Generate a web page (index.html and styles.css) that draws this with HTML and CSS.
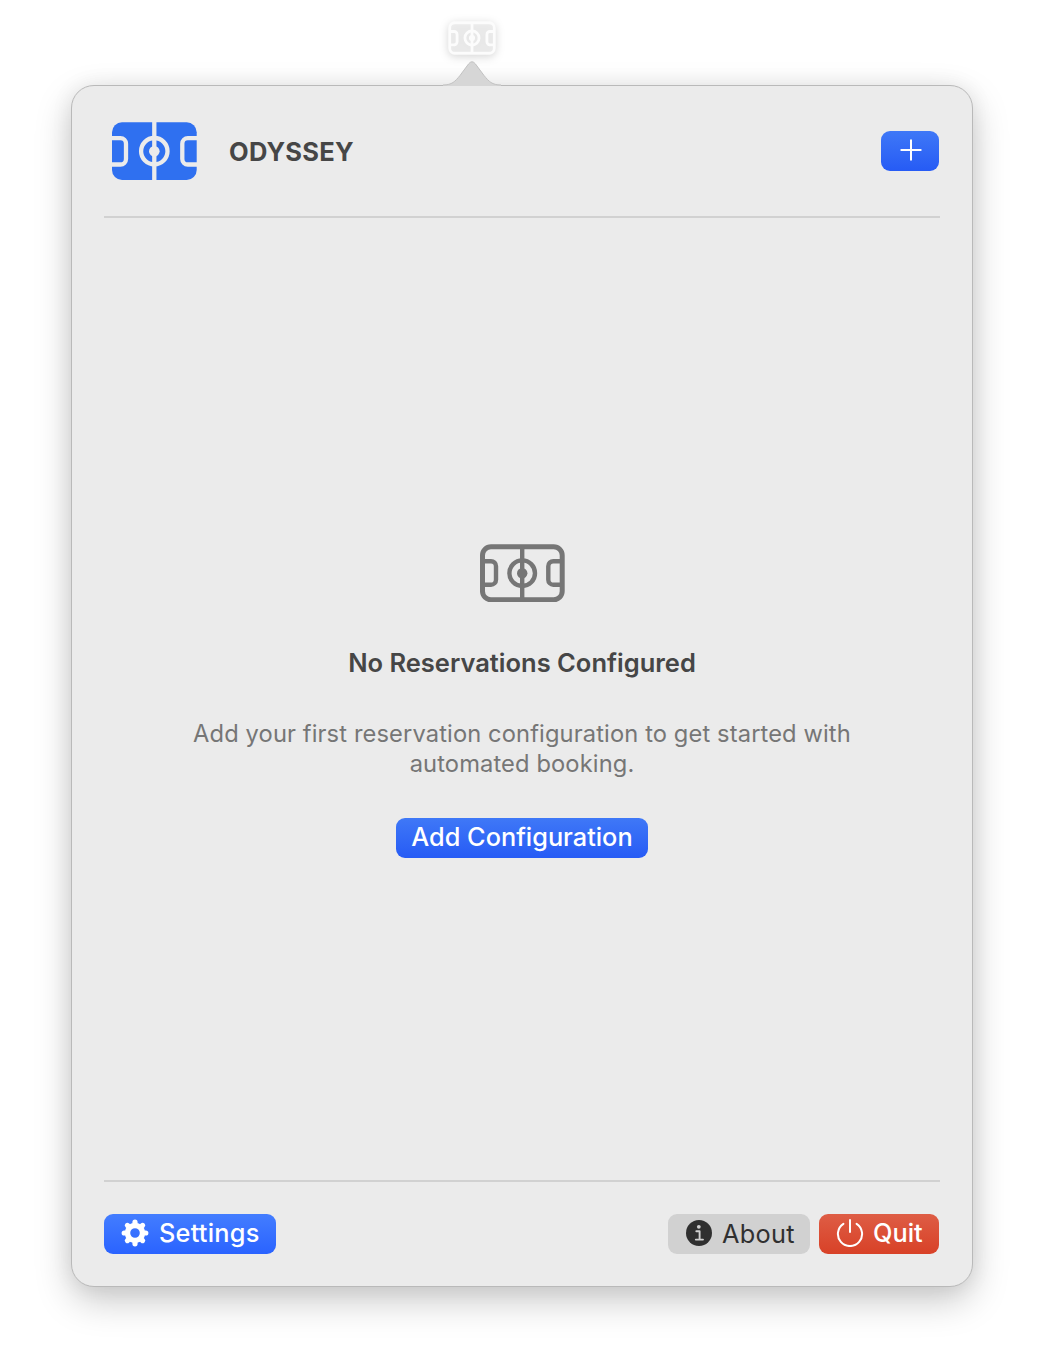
FILE: index.html
```
<!DOCTYPE html>
<html lang="en">
<head>
<meta charset="utf-8">
<title>Odyssey</title>
<link rel="stylesheet" href="styles.css">
</head>
<body>
<div class="menubar">
  <svg class="menubar-icon" width="48" height="34" viewBox="0 0 85 60" fill="none" stroke="#fcfcfc" stroke-width="4.9">
    <rect class="glass" x="3" y="3" width="79" height="54" rx="9"/>
    <path d="M42.500 3V57M3 18.500H11a5 5 0 0 1 5 5V37a5 5 0 0 1-5 5H3M82 18.500H74a5 5 0 0 0-5 5V37a5 5 0 0 0 5 5h8"/>
    <circle cx="42.500" cy="30" r="12.500"/>
    <circle cx="42.500" cy="30" r="5.400" fill="#fcfcfc" stroke="none"/>
  </svg>
</div>
<main class="popover">
  <svg class="arrow" width="64" height="26" viewBox="0 0 64 26">
    <path d="M3 25C12 25 15 21.500 20 15.500L28.500 4Q32 -0.500 35.500 4L44 15.500C49 21.500 52 25 61 25V26H3Z" fill="#d6d6d6"/>
    <path d="M3 25C12 25 15 21.500 20 15.500L28.500 4Q32 -0.500 35.500 4L44 15.500C49 21.500 52 25 61 25" fill="none" stroke="#c2c2c2"/>
  </svg>
  <header class="header">
    <svg class="logo" width="85" height="58" viewBox="0 0 85 58" fill="none" stroke="#ebebeb" stroke-width="4.3">
      <rect x="0" y="0.300" width="84.700" height="57.700" rx="10" fill="#2f70f0" stroke="none"/>
      <path d="M42.300 0V58M0 16.200H8.500a5.500 5.500 0 0 1 5.500 5.500V37a5.500 5.500 0 0 1-5.500 5.500H0M85 16.200H75.800a5.500 5.500 0 0 0-5.500 5.500V37a5.500 5.500 0 0 0 5.500 5.500H85"/>
      <circle cx="42.300" cy="29.200" r="13.200"/>
      <circle cx="42.300" cy="29.200" r="5.300" fill="#ebebeb" stroke="none"/>
    </svg>
    <h1 class="title">ODYSSEY</h1>
    <button class="btn blue plus" aria-label="Add">
      <svg width="23" height="22" viewBox="0 0 23 22" stroke="#fff" stroke-width="2" stroke-linecap="round"><path d="M12 1.300V20.700M2.300 11H21.700"/></svg>
    </button>
  </header>
  <section class="empty">
    <svg class="empty-icon" width="85" height="58" viewBox="0 0 85 58" fill="none" stroke="#767676" stroke-width="4.400">
      <rect x="2.500" y="2.800" width="79.700" height="53" rx="8.500" stroke-width="5"/>
      <path d="M42.200 3V56M3 17.200H11a5 5 0 0 1 5 5V35.700a5 5 0 0 1-5 5H3M82 17.200H73.300a5 5 0 0 0-5 5V35.700a5 5 0 0 0 5 5H82"/>
      <circle cx="42.200" cy="29.200" r="12.800"/>
      <circle cx="42.200" cy="29.200" r="5.200" fill="#767676" stroke="none"/>
    </svg>
    <h2 class="empty-title">No Reservations Configured</h2>
    <p class="empty-text">Add your first reservation configuration to get started with<br>automated booking.</p>
    <button class="btn blue add">Add Configuration</button>
  </section>
  <footer class="footer">
    <button class="btn bright settings">
      <svg width="28" height="28" viewBox="-14 -14 28 28" fill="none" stroke="#fff">
        <circle r="7.500" stroke-width="5.400"/>
        <path stroke-width="5.200" stroke-linecap="round" d="M0-8V-10.800M0 8V10.800M-8 0H-10.800M8 0H10.800M-6-6L-7.600-7.600M6-6L7.600-7.600M-6 6L-7.600 7.600M6 6L7.600 7.600"/>
      </svg>
      <span>Settings</span>
    </button>
    <button class="btn gray about">
      <svg width="26" height="26" viewBox="0 0 26 26"><circle cx="13" cy="13" r="13" fill="#303030"/><circle cx="12.800" cy="6.800" r="1.900" fill="#d1d1d1"/><path d="M10.300 11.300H13.600V19.600M9.800 19.600H17" fill="none" stroke="#d1d1d1" stroke-width="1.900" stroke-linecap="round" stroke-linejoin="round"/></svg>
      <span>About</span>
    </button>
    <button class="btn red quit">
      <svg width="28" height="28" viewBox="0 0 28 28" fill="none" stroke="#fff" stroke-width="2" stroke-linecap="round"><path d="M14 1V13M7.400 4.800A12.100 12.100 0 1 0 20.600 4.800"/></svg>
      <span>Quit</span>
    </button>
  </footer>
</main>
</body>
</html>
```
FILE: styles.css
```
* { box-sizing: border-box; }

body {
  margin: 0;
  height: 1366px;
  padding: 0 71px;
  background: #fff;
  font-family: Inter, "Liberation Sans", sans-serif;
  overflow: hidden;
}

svg { display: block; flex: none; }

.menubar {
  height: 85px;
  padding: 20.5px 0 0 376.5px;
}

.menubar-icon { filter: drop-shadow(0 2px 4px rgba(0, 0, 0, .18)); }
.glass { fill: rgba(236, 236, 236, .8); }

.popover {
  position: relative;
  display: flex;
  flex-direction: column;
  width: 902px;
  height: 1202px;
  padding: 0 32px;
  background: #ebebeb;
  border: 1px solid #b9b9b9;
  border-radius: 23px;
  box-shadow: 0 14px 36px rgba(0, 0, 0, .21), 0 0 22px rgba(0, 0, 0, .07);
}

.arrow {
  position: absolute;
  left: 368px;
  top: -26px;
}

.header {
  display: flex;
  align-items: center;
  height: 132px;
  padding: 0 1px 0 8px;
  border-bottom: 2px solid #d1d1d1;
}

.title {
  margin: 0 auto 0 32px;
  padding-top: 2px;
  font-size: 25.5px;
  line-height: 30px;
  font-weight: 700;
  letter-spacing: .25px;
  color: #464646;
}

.btn {
  display: flex;
  align-items: center;
  justify-content: center;
  height: 40px;
  padding: 0;
  border: 0;
  border-radius: 9px;
  color: #fff;
  font: 500 25.3px/30px Inter, "Liberation Sans", sans-serif;
  white-space: nowrap;
}

.blue { background: linear-gradient(#3f78f7, #265bf5); }
.bright { background: linear-gradient(#437dff, #2a63ff); }
.gray { background: #d1d1d1; color: #303030; font-weight: 400; }
.red { background: linear-gradient(#de5d45, #d84127); }

.plus { width: 58px; padding-bottom: 3px; }

.empty {
  flex: 1;
  display: flex;
  flex-direction: column;
  align-items: center;
  padding-top: 326px;
}

.empty-title {
  margin: 45px 0 0;
  font-size: 25.5px;
  line-height: 32px;
  font-weight: 600;
  color: #464646;
  white-space: nowrap;
}

.empty-text {
  margin: 40px 0 0;
  font-size: 23.7px;
  line-height: 30px;
  letter-spacing: .12px;
  text-align: center;
  color: #767676;
  white-space: nowrap;
}

.add { width: 252px; margin-top: 39px; padding-bottom: 2px; }

.footer {
  display: flex;
  height: 106px;
  padding: 32px 1px 0 0;
  border-top: 2px solid #d1d1d1;
}

.settings { width: 172px; margin-right: auto; padding: 0 0 2px 17px; gap: 10px; justify-content: flex-start; letter-spacing: .25px; }
.about { width: 142px; margin-right: 9px; padding: 0 0 2px 18px; gap: 10px; justify-content: flex-start; letter-spacing: .3px; }
.about span { padding-top: 2px; }
.quit { width: 120px; padding: 0 0 2px 17px; gap: 9px; justify-content: flex-start; }
```
